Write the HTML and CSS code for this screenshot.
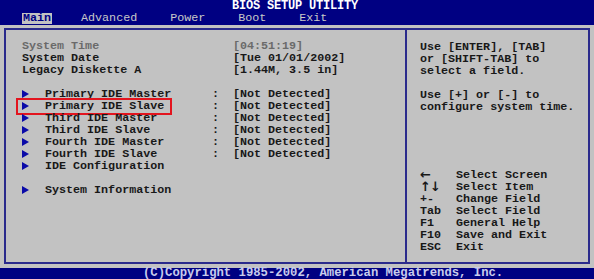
FILE: index.html
```html
<!DOCTYPE html>
<html>
<head>
<meta charset="utf-8">
<link rel="stylesheet" href="styles.css">
</head>
<body>
<div class="screen">
  <header class="topbar">
    <div class="title">BIOS SETUP UTILITY</div>
    <nav class="tabs">
      <span class="tab active">Main</span>
      <span class="tab">Advanced</span>
      <span class="tab">Power</span>
      <span class="tab">Boot</span>
      <span class="tab">Exit</span>
    </nav>
  </header>
  <main class="main">
    <div class="frame">
      <section class="left">
        <div class="row"><span class="label wide dim">System Time</span><span class="value dim">[04:51:19]</span></div>
        <div class="row"><span class="label wide">System Date</span><span class="value">[Tue 01/01/2002]</span></div>
        <div class="row"><span class="label wide">Legacy Diskette A</span><span class="value">[1.44M, 3.5 in]</span></div>
        <div class="spacer"></div>
        <div class="row"><span class="arrow"></span><span class="label">Primary IDE Master</span><span class="colon">:</span><span class="value">[Not Detected]</span></div>
        <div class="row selected"><span class="arrow"></span><span class="label">Primary IDE Slave</span><span class="colon">:</span><span class="value">[Not Detected]</span><span class="highlight"></span></div>
        <div class="row"><span class="arrow"></span><span class="label">Third IDE Master</span><span class="colon">:</span><span class="value">[Not Detected]</span></div>
        <div class="row"><span class="arrow"></span><span class="label">Third IDE Slave</span><span class="colon">:</span><span class="value">[Not Detected]</span></div>
        <div class="row"><span class="arrow"></span><span class="label">Fourth IDE Master</span><span class="colon">:</span><span class="value">[Not Detected]</span></div>
        <div class="row"><span class="arrow"></span><span class="label">Fourth IDE Slave</span><span class="colon">:</span><span class="value">[Not Detected]</span></div>
        <div class="row"><span class="arrow"></span><span class="label">IDE Configuration</span></div>
        <div class="spacer"></div>
        <div class="row"><span class="arrow"></span><span class="label">System Information</span></div>
      </section>
      <aside class="right">
        <div class="help">
          <div>Use [ENTER], [TAB]</div>
          <div>or [SHIFT-TAB] to</div>
          <div>select a field.</div>
          <div class="spacer"></div>
          <div>Use [+] or [-] to</div>
          <div>configure system time.</div>
        </div>
        <div class="keys">
          <div class="krow"><span class="key sym">&#8592;</span><span>Select Screen</span></div>
          <div class="krow"><span class="key sym">&#8593;&#8595;</span><span>Select Item</span></div>
          <div class="krow"><span class="key">+-</span><span>Change Field</span></div>
          <div class="krow"><span class="key">Tab</span><span>Select Field</span></div>
          <div class="krow"><span class="key">F1</span><span>General Help</span></div>
          <div class="krow"><span class="key">F10</span><span>Save and Exit</span></div>
          <div class="krow"><span class="key">ESC</span><span>Exit</span></div>
        </div>
      </aside>
    </div>
  </main>
  <footer class="footer">(C)Copyright 1985-2002, American Megatrends, Inc.</footer>
</div>
</body>
</html>
```
FILE: styles.css
```css
html, body {
  margin: 0;
  padding: 0;
  background: #c2c2c2;
}
.screen {
  width: 594px;
  height: 279px;
  overflow: hidden;
  font-family: "Liberation Mono", "Courier New", monospace;
  font-weight: bold;
  font-size: 11.7px;
  color: #181818;
  display: flex;
  flex-direction: column;
}
.topbar {
  background: #000082;
  height: 25px;
  display: flex;
  flex-direction: column;
}
.title {
  color: #ffffff;
  padding-left: 232px;
  height: 13px;
  line-height: 13px;
  font-size: 12px;
  letter-spacing: -0.2px;
}
.tabs {
  display: flex;
  gap: 33px;
  padding-left: 22px;
  height: 11px;
  line-height: 11px;
  color: #c8c8c8;
  font-weight: normal;
}
.tab.active {
  background: #c2c2c2;
  color: #000082;
  font-weight: bold;
  padding: 0 1px;
  margin-right: -4px;
}
.main {
  flex: 1;
  padding: 3px 4px 4px 4px;
  display: flex;
}
.frame {
  flex: 1;
  display: flex;
  border: 2px solid #2a2a8c;
}
.left {
  width: 399px;
  padding: 10px 0 0 16px;
  box-sizing: border-box;
}
.row {
  position: relative;
  display: flex;
  align-items: center;
  height: 12px;
  line-height: 12px;
  white-space: pre;
}
.spacer {
  height: 12px;
}
.arrow {
  width: 0;
  height: 0;
  border-left: 7px solid #0a0aa8;
  border-top: 4px solid transparent;
  border-bottom: 4px solid transparent;
  margin-right: 16px;
}
.label {
  width: 167px;
}
.label.wide {
  width: 211px;
}
.colon {
  width: 21px;
}
.dim {
  color: #6a6a6a;
}
.highlight {
  position: absolute;
  left: -6px;
  top: -2px;
  width: 152px;
  height: 13px;
  border: 2px solid #e3141e;
}
.right {
  flex: 1;
  border-left: 2px solid #2a2a8c;
  padding: 11px 0 0 13px;
  display: flex;
  flex-direction: column;
}
.help div {
  height: 12px;
  line-height: 12px;
  white-space: pre;
}
.keys {
  margin-top: 56px;
}
.krow {
  display: flex;
  height: 12px;
  line-height: 12px;
  white-space: pre;
}
.key {
  width: 36px;
}
.key.sym {
  font-family: "DejaVu Sans", sans-serif;
  font-size: 13px;
  letter-spacing: -1px;
}
.footer {
  background: #000082;
  color: #c8ccec;
  height: 11px;
  line-height: 11px;
  padding-left: 143px;
  font-size: 12.25px;
}
```
